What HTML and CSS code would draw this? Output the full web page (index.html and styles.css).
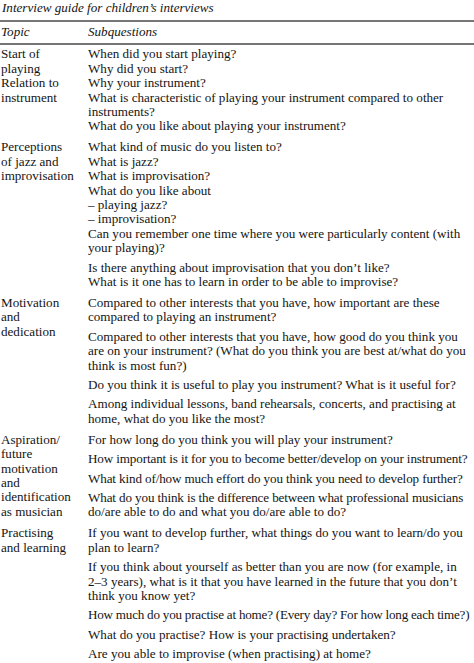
FILE: index.html
```html
<!DOCTYPE html>
<html lang="en">
<head>
<meta charset="utf-8">
<title>Interview guide for children’s interviews</title>
<link rel="stylesheet" href="styles.css">
</head>
<body>
<div class="page">
  <p class="caption">Interview guide for children’s interviews</p>
  <div class="table">
    <div class="head">
      <div class="topic">Topic</div>
      <div class="qs">Subquestions</div>
    </div>

    <div class="group first">
      <div class="topic">Start of<br>playing<br>Relation to<br>instrument</div>
      <div class="qs">
        <p class="q">When did you start playing?</p>
        <p class="q">Why did you start?</p>
        <p class="q">Why your instrument?</p>
        <p class="q">What is characteristic of playing your instrument compared to other<br>instruments?</p>
        <p class="q">What do you like about playing your instrument?</p>
      </div>
    </div>

    <div class="group">
      <div class="topic">Perceptions<br>of jazz and<br>improvisation</div>
      <div class="qs">
        <p class="q">What kind of music do you listen to?</p>
        <p class="q">What is jazz?</p>
        <p class="q">What is improvisation?</p>
        <p class="q">What do you like about</p>
        <p class="q">– playing jazz?</p>
        <p class="q">– improvisation?</p>
        <p class="q">Can you remember one time where you were particularly content (with<br>your playing)?</p>
        <p class="q sp">Is there anything about improvisation that you don’t like?</p>
        <p class="q">What is it one has to learn in order to be able to improvise?</p>
      </div>
    </div>

    <div class="group">
      <div class="topic">Motivation<br>and<br>dedication</div>
      <div class="qs">
        <p class="q">Compared to other interests that you have, how important are these<br>compared to playing an instrument?</p>
        <p class="q sp">Compared to other interests that you have, how good do you think you<br>are on your instrument? (What do you think you are best at/what do you<br>think is most fun?)</p>
        <p class="q sp">Do you think it is useful to play you instrument? What is it useful for?</p>
        <p class="q sp">Among individual lessons, band rehearsals, concerts, and practising at<br>home, what do you like the most?</p>
      </div>
    </div>

    <div class="group">
      <div class="topic">Aspiration/<br>future<br>motivation<br>and<br>identification<br>as musician</div>
      <div class="qs">
        <p class="q">For how long do you think you will play your instrument?</p>
        <p class="q sp tight">How important is it for you to become better/develop on your instrument?</p>
        <p class="q sp tight">What kind of/how much effort do you think you need to develop further?</p>
        <p class="q sp"><span class="tight">What do you think is the difference between what professional musicians</span><br>do/are able to do and what you do/are able to do?</p>
      </div>
    </div>

    <div class="group">
      <div class="topic">Practising<br>and learning</div>
      <div class="qs">
        <p class="q">If you want to develop further, what things do you want to learn/do you<br>plan to learn?</p>
        <p class="q sp">If you think about yourself as better than you are now (for example, in<br>2–3 years), what is it that you have learned in the future that you don’t<br>think you know yet?</p>
        <p class="q sp tighter">How much do you practise at home? (Every day? For how long each time?)</p>
        <p class="q sp">What do you practise? How is your practising undertaken?</p>
        <p class="q sp">Are you able to improvise (when practising) at home?</p>
      </div>
    </div>
  </div>
</div>
</body>
</html>
```

FILE: styles.css
```css
html, body {
  margin: 0;
  padding: 0;
  background: #ffffff;
}

body {
  overflow: hidden;
  font-family: "Liberation Serif", "Times New Roman", serif;
  font-size: 13.1px;
  line-height: 14.4px;
  color: #141414;
}

.page {
  width: 474px;
  padding-top: 1px;
  box-sizing: border-box;
}

.caption {
  margin: 0;
  padding-left: 2px;
  font-style: italic;
  white-space: nowrap;
}

.table {
  margin-top: 4.6px;
  border-top: 2px solid #767676;
}

.head {
  display: grid;
  grid-template-columns: 88px 1fr;
  font-style: italic;
  padding: 2.5px 0 3.8px;
  border-bottom: 2px solid #767676;
}

.group {
  display: grid;
  grid-template-columns: 88px 1fr;
  padding-top: 6.6px;
}

.group.first {
  padding-top: 2.6px;
}

.topic {
  padding-left: 1px;
  white-space: nowrap;
}

.qs {
  white-space: nowrap;
  min-width: 0;
}

.q {
  margin: 0;
  white-space: nowrap;
}

.q.sp {
  margin-top: 5px;
}

.tight {
  letter-spacing: -0.12px;
}

.tighter {
  letter-spacing: -0.22px;
}
```
